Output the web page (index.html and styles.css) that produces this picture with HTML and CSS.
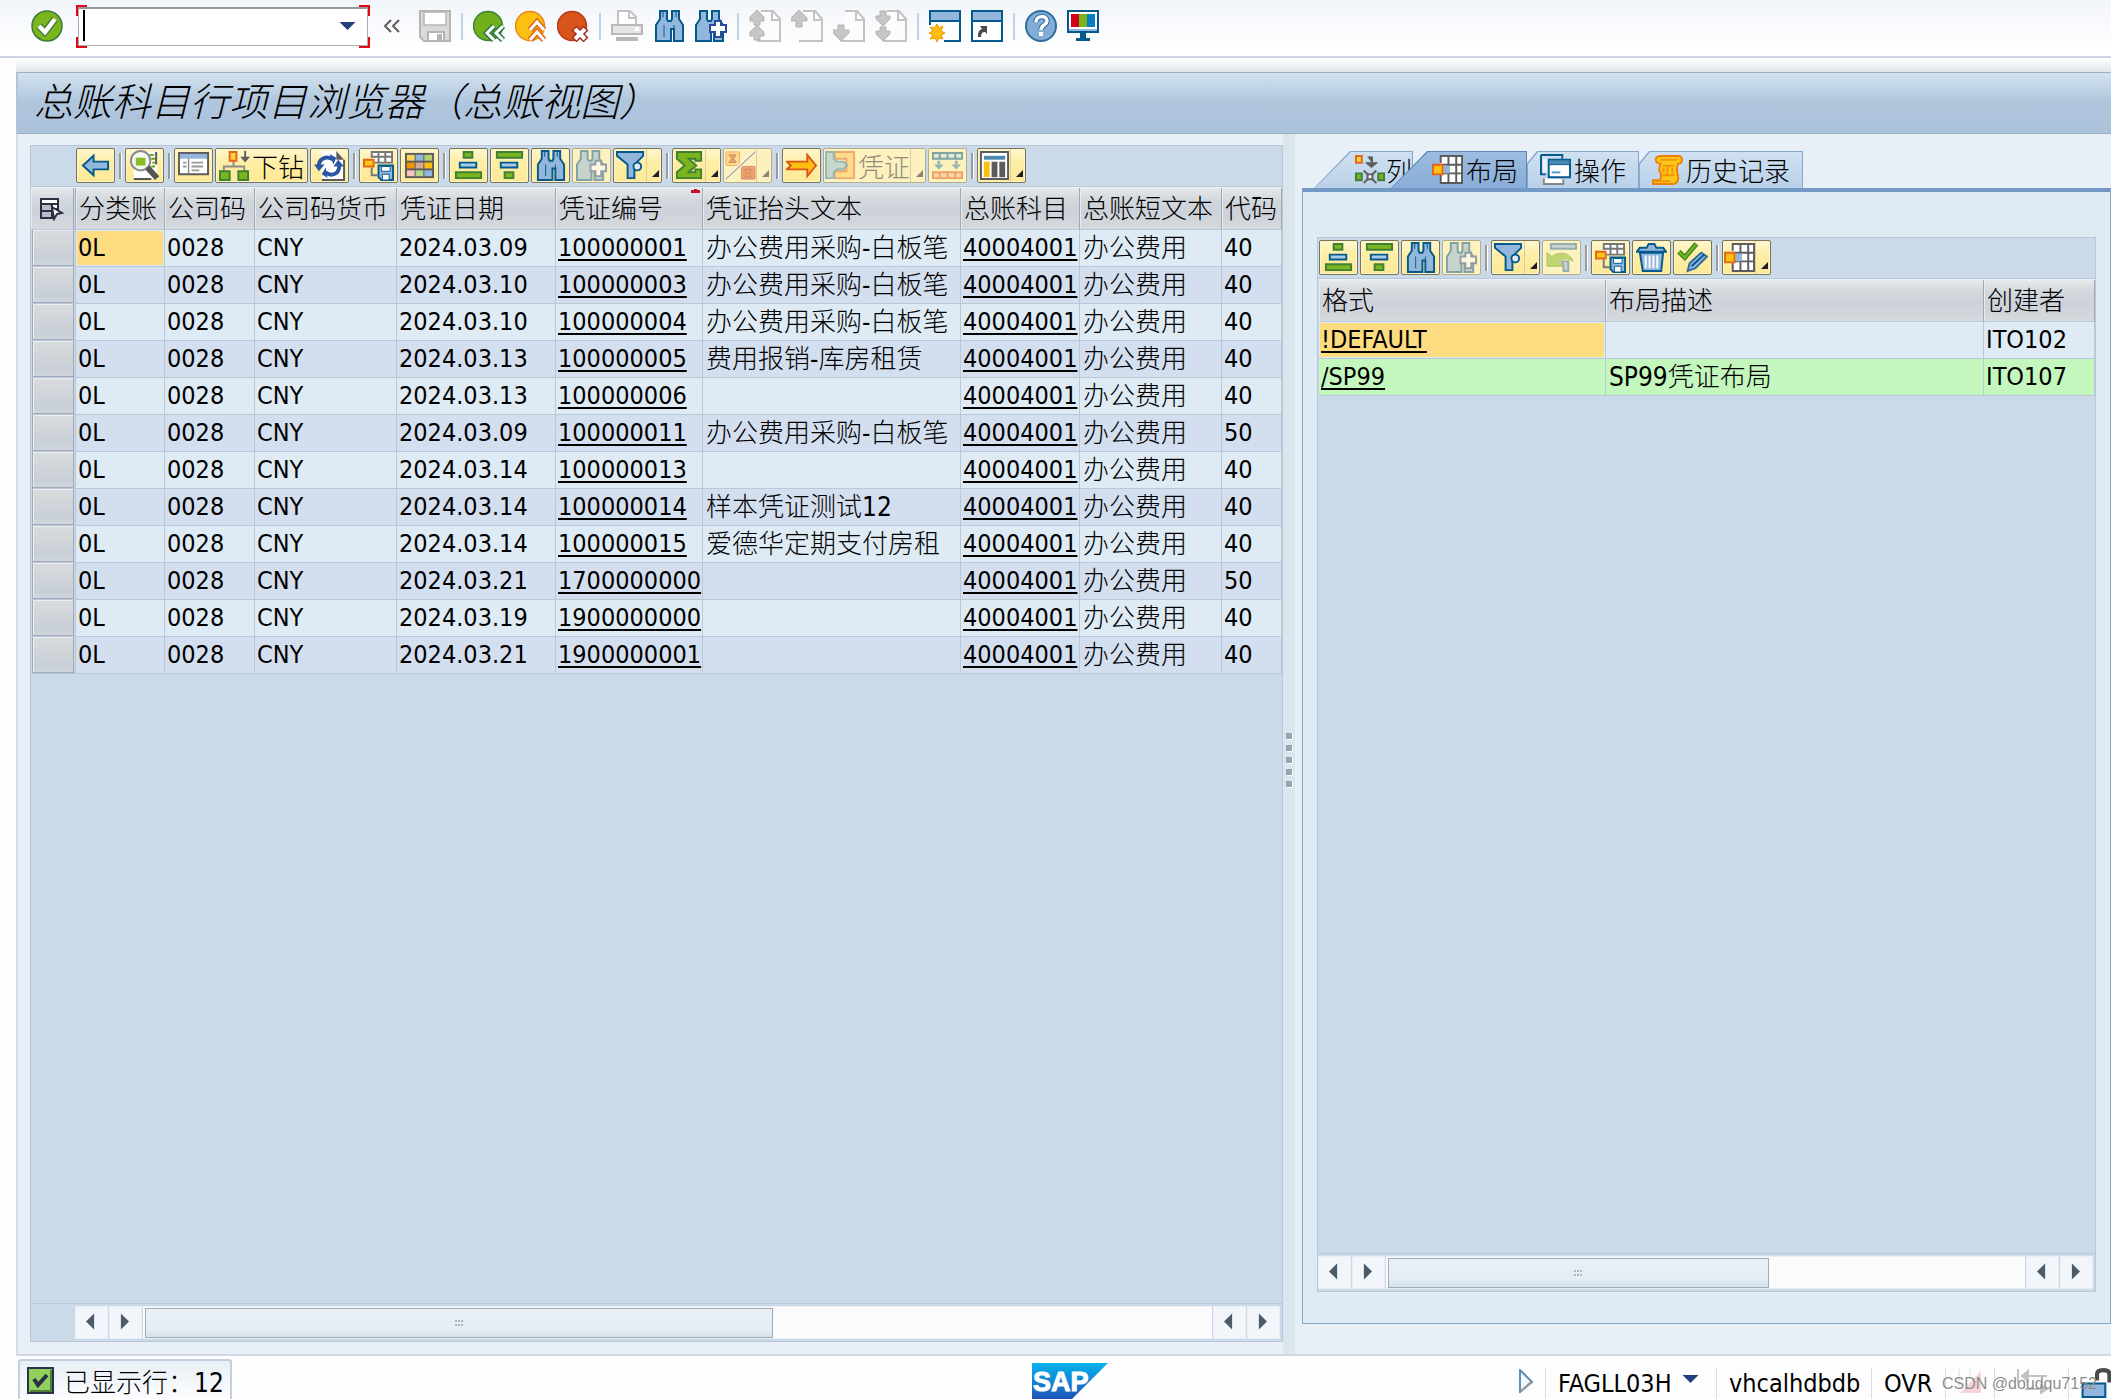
FILE: index.html
```html
<!DOCTYPE html>
<html lang="zh-CN">
<head>
    <meta charset="UTF-8">
    <meta name="viewport" content="width=device-width, initial-scale=1.0">
    <title>总账科目行项目浏览器（总账视图）</title>
    <link rel="stylesheet" href="styles.css">
</head>
<body>
    <!-- Icon set -->
    <svg class="icon-defs" aria-hidden="true">
        <defs>
            <linearGradient id="sap-blue" x1="0" y1="0" x2="0" y2="1">
                <stop offset="0" stop-color="#06b4ee"/>
                <stop offset="1" stop-color="#1f55b8"/>
            </linearGradient>
        </defs>
        <symbol id="i-ok" viewBox="0 0 32 32">
            <circle cx="16" cy="16" r="15" fill="#7ab51d" stroke="#3c7a3c" stroke-width="1.5"/>
            <path d="M8 16l6 6 10-13" fill="none" stroke="#3c7a3c" stroke-width="7"/>
            <path d="M8 16l6 6 10-13" fill="none" stroke="#fff" stroke-width="4.5"/>
        </symbol>
        <symbol id="i-save" viewBox="0 0 32 32">
            <path d="M1 1h30v30H5l-4-4z" fill="#d9d9d9" stroke="#b5b5b5" stroke-width="2"/>
            <path d="M5 2h22v13H5z" fill="#fff" stroke="#b5b5b5" stroke-width="1.5"/>
            <path d="M9 22h16v9H9z" fill="#fff" stroke="#b5b5b5" stroke-width="2"/>
            <path d="M18 24h5v6h-5z" fill="#b5b5b5"/>
        </symbol>
        <symbol id="i-back" viewBox="0 0 32 32">
            <circle cx="15" cy="16" r="14.5" fill="#6fb01c" stroke="#3f8038" stroke-width="1.5"/>
            <path d="M21 16l-7 7 7 7M30 16l-7 7 7 7" fill="none" stroke="#2d7a40" stroke-width="6"/>
            <path d="M21 16l-7 7 7 7M30 16l-7 7 7 7" fill="none" stroke="#fff" stroke-width="3"/>
        </symbol>
        <symbol id="i-exit" viewBox="0 0 32 32">
            <circle cx="15" cy="16" r="14.5" fill="#fdc010" stroke="#e58a1c" stroke-width="1.5"/>
            <path d="M15 20l7-8 7 8M15 30l7-8 7 8" fill="none" stroke="#e0681a" stroke-width="6"/>
            <path d="M15 20l7-8 7 8M15 30l7-8 7 8" fill="none" stroke="#fff" stroke-width="3"/>
        </symbol>
        <symbol id="i-cancel" viewBox="0 0 32 32">
            <circle cx="15" cy="16" r="14.5" fill="#d9541a" stroke="#b33c1c" stroke-width="1.5"/>
            <path d="M17 18l12 12M29 18L17 30" stroke="#a82a18" stroke-width="7"/>
            <path d="M18 19l10 10M28 19L18 29" stroke="#fff" stroke-width="4"/>
        </symbol>
        <symbol id="i-print" viewBox="0 0 32 32">
            <path d="M7 15V1h12l6 6v8" fill="#fff" stroke="#c3c3c3" stroke-width="2"/>
            <path d="M18 1v7h7" fill="none" stroke="#c3c3c3" stroke-width="2"/>
            <path d="M1 15h30v9H1z" fill="#e6e6e6" stroke="#b8b8b8" stroke-width="2"/>
            <path d="M24 17h4v4h-4z" fill="#fff"/>
            <path d="M5 27h22v4H5z" fill="#b8b8b8"/>
        </symbol>
        <symbol id="i-find" viewBox="0 0 32 32">
            <path d="M7 1h7v8l1 2h3l1-2V1h7v8l4 6v16h-9V19h-3v12H3V15l4-6z" fill="#93b7dc" stroke="#045a8d" stroke-width="2"/>
            <path d="M10 1v6M23 1v6M11 15v12M21 15v4" stroke="#045a8d" stroke-width="1"/>
        </symbol>
        <symbol id="i-findnext" viewBox="0 0 32 32">
            <path d="M5 1h7v8l1 2h3l1-2V1h7v8l4 6v16h-9V19h-3v12H1V15l4-6z" fill="#93b7dc" stroke="#045a8d" stroke-width="2"/>
            <path d="M20 11h6v4h5v7h-5v5h-6v-5h-5v-7h5z" fill="#fff" stroke="#2a4b9b" stroke-width="2"/>
        </symbol>
        <symbol id="i-page" viewBox="0 0 32 32">
            <path d="M12 1h12l7 8v22H8" fill="#fcfcfc" stroke="#c3c3c3" stroke-width="2"/>
            <path d="M23 1v9h8" fill="none" stroke="#c3c3c3" stroke-width="2"/>
        </symbol>
        <symbol id="i-first" viewBox="0 0 32 32">
            <use href="#i-page"/>
            <path d="M8 0l7 7v4h-4v4H5v-4H1V7zM8 15l7 7v4h-4v4H5v-4H1v-4z" fill="#c6c6c6" stroke="#b3b3b3"/>
        </symbol>
        <symbol id="i-prev" viewBox="0 0 32 32">
            <use href="#i-page"/>
            <path d="M8 0l8 8v3h-5v6H5v-6H0V8z" fill="#c6c6c6" stroke="#b3b3b3"/>
        </symbol>
        <symbol id="i-next" viewBox="0 0 32 32">
            <use href="#i-page"/>
            <path d="M8 31l8-8v-3h-5v-5H5v5H0v3z" fill="#c6c6c6" stroke="#b3b3b3"/>
        </symbol>
        <symbol id="i-last" viewBox="0 0 32 32">
            <use href="#i-page"/>
            <path d="M8 16l7-7V6h-4V1H5v5H1v3zM8 31l7-7v-3h-4v-4H5v4H1v3z" fill="#c6c6c6" stroke="#b3b3b3"/>
        </symbol>
        <symbol id="i-newsession" viewBox="0 0 32 32">
            <path d="M1 1h30v30H1z" fill="#fff"/>
            <path d="M1 1h30v9H1z" fill="#93b7dc"/>
            <path d="M1 15V1h30v30H15M1 11h30" fill="none" stroke="#045a8d" stroke-width="2"/>
            <path d="M8 14l2 4 4-2-2 5 4 2-4 2 2 4-4-1-2 4-2-4-5 1 3-4-4-2 4-2-3-4 5 1z" fill="#fdc010" stroke="#f29400"/>
        </symbol>
        <symbol id="i-shortcut" viewBox="0 0 32 32">
            <path d="M1 1h30v30H1z" fill="#fff" stroke="#045a8d" stroke-width="2"/>
            <path d="M2 2h28v8H2z" fill="#93b7dc"/>
            <path d="M1 11h30" stroke="#045a8d" stroke-width="2"/>
            <path d="M7 27c0-5 1-7 4-8l-2-3h7v8l-2-2c-3 0-4 2-4 5z" fill="#4a4a4a"/>
        </symbol>
        <symbol id="i-help" viewBox="0 0 32 32">
            <circle cx="16" cy="16" r="15" fill="#84add6" stroke="#2f6c9f" stroke-width="2"/>
            <path d="M11 12c0-7 11-7 11-1 0 4-6 4-6 9" fill="none" stroke="#2f6c9f" stroke-width="5.5"/>
            <path d="M11 12c0-7 11-7 11-1 0 4-6 4-6 9" fill="none" stroke="#fff" stroke-width="3.5"/>
            <path d="M14 22h4v4h-4z" fill="#fff"/>
        </symbol>
        <symbol id="i-monitor" viewBox="0 0 32 32">
            <path d="M1 1h30v21H1z" fill="#fff" stroke="#045a8d" stroke-width="2"/>
            <path d="M4 4h8v13H4z" fill="#d0021b"/>
            <path d="M12 4h8v13h-8z" fill="#7ab51d"/>
            <path d="M20 4h8v13h-8z" fill="#0a7cc4"/>
            <path d="M2 19h28v2H2z" fill="#93b7dc"/>
            <path d="M13 23h6v5h4v3H9v-3h4z" fill="#045a8d"/>
        </symbol>

        <symbol id="i-left" viewBox="0 0 32 32">
            <path d="M3 16L14 6v6h15v8H14v6z" fill="#93b7dc" stroke="#045a8d" stroke-width="2"/>
        </symbol>
        <symbol id="i-detail" viewBox="0 0 32 32">
            <path d="M7 2h22v28H5V18z" fill="#fff"/>
            <path d="M21 5h5M23 9h4M24 13h3M23 17h4" stroke="#5fa317" stroke-width="2"/>
            <path d="M28 2v13M5 30h18" stroke="#555" stroke-width="2"/>
            <circle cx="12" cy="11" r="10" fill="#f4f8ee" stroke="#8a8a8a" stroke-width="2"/>
            <path d="M7 8h10v8H7z" fill="#86bc25"/>
            <path d="M19 18l10 11" stroke="#555" stroke-width="6"/>
        </symbol>
        <symbol id="i-view" viewBox="0 0 32 32">
            <path d="M1 3h30v22H1z" fill="#fff" stroke="#5c5c5c" stroke-width="2"/>
            <path d="M2 4h28v5H2z" fill="#93b7dc"/>
            <path d="M11 9v15" stroke="#5c5c5c" stroke-width="1"/>
            <path d="M5 13h4M5 17h4M14 13h12M14 17h12M14 21h8" stroke="#9a9a9a" stroke-width="2"/>
        </symbol>
        <symbol id="i-drill" viewBox="0 0 32 32">
            <path d="M15 10v7M5 22v-5h21v5" fill="none" stroke="#8c8c8c" stroke-width="2"/>
            <path d="M11 2h7v9h-7z" fill="#ffd23c" stroke="#e2661c" stroke-width="2"/>
            <path d="M1 22h10v9H1zM20 22h10v9H20z" fill="#7ab51d" stroke="#3f8038" stroke-width="2"/>
            <path d="M27 1v7" stroke="#5c5c5c" stroke-width="2"/>
            <path d="M22 7h10l-5 6z" fill="#5c5c5c"/>
        </symbol>
        <symbol id="i-refresh" viewBox="0 0 32 32">
            <path d="M8 1h15l8 9v21H8z" fill="#fff"/>
            <path d="M23 1l8 9h-8z" fill="#5c5c5c"/>
            <path d="M8 31h23V10" fill="none" stroke="#5c5c5c" stroke-width="2"/>
            <path d="M5 18c-1-9 8-13 15-8M26 15c1 10-8 13-14 8" fill="none" stroke="#2a57a5" stroke-width="4"/>
            <path d="M0 15h11l-6 7zM16 4l7 4-3 7zM20 17h11l-6-7zM14 29l-6-4 4-7z" fill="#2a57a5"/>
        </symbol>
        <symbol id="i-savelayout" viewBox="0 0 32 32">
            <path d="M9 8V2h21v11H12" fill="#fff" stroke="#777" stroke-width="2"/>
            <path d="M16 2v11M23 2v11M9 7h21M9 18v8h6" fill="none" stroke="#777" stroke-width="2"/>
            <path d="M1 10h10v7H1z" fill="#ffc61a" stroke="#e2661c" stroke-width="2"/>
            <path d="M16 16h15v15H19l-3-3z" fill="#93b7dc" stroke="#045a8d" stroke-width="2"/>
            <path d="M19 17h9v5h-9zM20 25h7v6h-7z" fill="#fff" stroke="#045a8d"/>
        </symbol>
        <symbol id="i-colorgrid" viewBox="0 0 32 32">
            <path d="M1 3h30v26H1z" fill="#5c5c5c"/>
            <path d="M3 5h8v6H3z" fill="#ffd65c"/><path d="M12 5h8v6h-8z" fill="#93b7dc"/><path d="M21 5h8v6h-8z" fill="#b4d36a"/>
            <path d="M3 13h8v6H3z" fill="#f29400"/><path d="M12 13h8v6h-8z" fill="#d3ab98"/><path d="M21 13h8v6h-8z" fill="#fdc010"/>
            <path d="M3 21h8v6H3z" fill="#f6c3c0"/><path d="M12 21h8v6h-8z" fill="#b5d88a"/><path d="M21 21h8v6h-8z" fill="#93b7dc"/>
        </symbol>
        <symbol id="i-asc" viewBox="0 0 32 32">
            <path d="M11 2h9v6h-9zM3 23h26v6H3z" fill="#7ab51d" stroke="#3f8038" stroke-width="2"/>
            <path d="M7 13h17v5H7z" fill="#a9cbe8" stroke="#045a8d" stroke-width="2"/>
        </symbol>
        <symbol id="i-desc" viewBox="0 0 32 32">
            <path d="M3 2h26v6H3zM11 23h9v6h-9z" fill="#7ab51d" stroke="#3f8038" stroke-width="2"/>
            <path d="M7 13h17v5H7z" fill="#a9cbe8" stroke="#045a8d" stroke-width="2"/>
        </symbol>
        <symbol id="i-filter" viewBox="0 0 32 32">
            <path d="M2 2h27v4l-9 9v14h-7V15L2 6z" fill="#93b7dc" stroke="#045a8d" stroke-width="2"/>
            <circle cx="23" cy="17" r="4" fill="#dfeaf2" stroke="#045a8d" stroke-width="2"/>
        </symbol>
        <symbol id="i-sum" viewBox="0 0 32 32">
            <path d="M3 2h25v9h-6V9h-7l8 7-8 7h7v-3h6v9H3v-6l8-7-8-7z" fill="#7ab51d" stroke="#3f8038" stroke-width="2"/>
        </symbol>
        <symbol id="i-subtotal" viewBox="0 0 32 32">
            <path d="M1 2h14v14H1z" fill="#ffc95c" stroke="#e2661c"/>
            <path d="M17 17h14v13H17z" fill="#e2511c" stroke="#b33c1c"/>
            <path d="M4 5h7v2L8 9l3 2v2H4l3-4zM20 20h7v2l-3 2 3 2v2h-7l3-4z" fill="#d9541a" stroke="#9b2c15"/>
            <path d="M31 2L1 30" stroke="#fff" stroke-width="4"/>
            <path d="M31 2L1 30" stroke="#666" stroke-width="1.5"/>
        </symbol>
        <symbol id="i-right" viewBox="0 0 32 32">
            <path d="M1 12h21V5l9 11-9 11v-7H1l4-4z" fill="#fdc010" stroke="#d9541a" stroke-width="2"/>
        </symbol>
        <symbol id="i-doc" viewBox="0 0 32 32">
            <path d="M10 2h20v27H10v-7h12V9H10z" fill="#ffc95c" stroke="#e2661c" stroke-width="2"/>
            <path d="M1 2h8v7l3 3h7l4 4-4 4h-7l-3 3v6H1z" fill="#93c3dc" stroke="#2f7ca8" stroke-width="2"/>
        </symbol>
        <symbol id="i-expand" viewBox="0 0 32 32">
            <path d="M1 3h30v6H1z" fill="#cfe3f0" stroke="#045a8d" stroke-width="2"/>
            <path d="M8 3v6M16 3v6M24 3v6" stroke="#045a8d" stroke-width="2"/>
            <path d="M7 11v4M25 11v4" stroke="#2f7ca8" stroke-width="3"/>
            <path d="M2 15h10l-5 5zM20 15h10l-5 5z" fill="#2f7ca8"/>
            <path d="M1 23h30v6H1z" fill="#f6c08a" stroke="#d9541a" stroke-width="2"/>
            <path d="M8 23v6M16 23v6M24 23v6" stroke="#d9541a" stroke-width="2"/>
        </symbol>
        <symbol id="i-columns" viewBox="0 0 32 32">
            <path d="M2 2h28v28H2z" fill="#fff" stroke="#5c5c5c" stroke-width="2"/>
            <path d="M5 6h22v4H5z" fill="#4a87b0"/>
            <path d="M5 12h6v16H5z" fill="#fdc010"/>
            <path d="M13 12h6v16h-6zM21 12h6v16h-6z" fill="#5c5c5c"/>
        </symbol>
        <symbol id="i-unfilter" viewBox="0 0 32 32">
            <path d="M5 2h26v5H5z" fill="#93b7dc" stroke="#2f6c9f" stroke-width="2"/>
            <path d="M16 20h7v10h-5v-6z" fill="#93b7dc" stroke="#2f6c9f" stroke-width="2"/>
            <path d="M1 11l5 4c8-6 19-4 22 5-6-4-11-3-15 0l5 5H1z" fill="#86bc25" stroke="#5f9a1c" stroke-width="1"/>
        </symbol>
        <symbol id="i-trash" viewBox="0 0 32 32">
            <path d="M1 10l3-4h7l2-4h6l2 4h7l3 4z" fill="#93b7dc" stroke="#045a8d" stroke-width="2"/>
            <path d="M4 11h24l-2 19H7z" fill="#93b7dc" stroke="#045a8d" stroke-width="2"/>
            <path d="M10 14v13M14 14v13M18 14v13M22 14v13" stroke="#fff" stroke-width="2"/>
        </symbol>
        <symbol id="i-checkedit" viewBox="0 0 32 32">
            <path d="M2 10l6 6L20 2" fill="none" stroke="#2e6e2e" stroke-width="5"/>
            <path d="M2 10l6 6L20 2" fill="none" stroke="#6fb01c" stroke-width="3"/>
            <path d="M11 30l2-8 12-11 6 4-12 12z" fill="#93b7dc" stroke="#2f6c9f" stroke-width="2"/>
            <path d="M15 25l13-12" stroke="#045a8d" stroke-width="2"/>
        </symbol>
        <symbol id="i-layout" viewBox="0 0 32 32">
            <path d="M9 2h22v28H9z" fill="#fff"/>
            <path d="M31 2H9v7M9 20v10h22M17 2v28M25 2v28M31 1v30M9 11h22M9 20h22" fill="none" stroke="#5c5c5c" stroke-width="2"/>
            <path d="M12 12h6v8h-6z" fill="#93b7dc"/>
            <path d="M1 11h10v10H1z" fill="#fdc010" stroke="#e2661c" stroke-width="2"/>
        </symbol>
        <symbol id="i-cols" viewBox="0 0 32 32">
            <path d="M1 2h6v7H1z" fill="#ffd23c" stroke="#e2661c" stroke-width="2"/>
            <path d="M13 3h5v7M11 9h12l-6 5z" fill="#5c5c5c" stroke="#5c5c5c" stroke-width="1"/>
            <path d="M9 17l13 13M22 17L9 30" stroke="#5c5c5c" stroke-width="2"/>
            <path d="M13 21h5v5h-5z" fill="#fff" stroke="#5c5c5c" stroke-width="2"/>
            <path d="M1 20h6v7H1zM24 20h6v7h-6z" fill="#7ab51d" stroke="#3f8038" stroke-width="2"/>
        </symbol>
        <symbol id="i-ops" viewBox="0 0 32 32">
            <path d="M1 1h22v4M1 1v20h5" fill="none" stroke="#045a8d" stroke-width="2"/>
            <path d="M3 5h5v14H3z" fill="#e9f2f9"/>
            <path d="M4 25v6h20v-5" fill="#fff" stroke="#888" stroke-width="2"/>
            <path d="M9 6h22v18H9z" fill="#fff" stroke="#045a8d" stroke-width="2"/>
            <path d="M9 6h22v5H9z" fill="#4a87b0" stroke="#045a8d" stroke-width="1"/>
            <path d="M12 19h9" stroke="#4a9bd0" stroke-width="2"/>
        </symbol>
        <symbol id="i-history" viewBox="0 0 32 32">
            <path d="M8 2q-5 1-4 5 1 3 5 3-3 6 0 10 1 4-1 7H1v4h21q5-1 5-6 0-3-1-6-1-5 1-9 4 0 4-4 0-4-4-4z" fill="#ffc61a" stroke="#ee7f11" stroke-width="2"/>
            <path d="M9 6h17M11 12h12M16 12v10M21 14v6M12 14v5M11 22h12M3 28h16" fill="none" stroke="#f29400" stroke-width="2"/>
        </symbol>
        <symbol id="i-selectall" viewBox="0 0 24 24">
            <path d="M1 2h17v5H1zM1 7h17v5H1z" fill="#fff" stroke="#2c3047" stroke-width="2"/>
            <path d="M1 7h11v14H1zM1 14h11" fill="#b9bec8" stroke="#2c3047" stroke-width="2"/>
            <path d="M12 10l10 6-5 1-3 5z" fill="#fff" stroke="#2c3047" stroke-width="2"/>
        </symbol>
        <symbol id="i-down" viewBox="0 0 18 9">
            <path d="M0 0h18l-9 9z" fill="#24407c"/>
        </symbol>
        <symbol id="i-corner" viewBox="0 0 8 8">
            <path d="M8 0v8H0z" fill="#1d1d2b"/>
        </symbol>
        <symbol id="i-tri-left" viewBox="0 0 10 18">
            <path d="M9 0v18L0 9z" fill="#4a5c6c"/>
        </symbol>
        <symbol id="i-tri-right" viewBox="0 0 10 18">
            <path d="M1 0v18l9-9z" fill="#4a5c6c"/>
        </symbol>
        <symbol id="i-grip" viewBox="0 0 9 7">
            <path d="M0 0h2v2H0zM3 0h2v2H3zM6 0h2v2H6zM0 4h2v2H0zM3 4h2v2H3zM6 4h2v2H6z" fill="#a9b6c3"/>
        </symbol>
        <symbol id="i-success" viewBox="0 0 27 27">
            <path d="M1 1h25v25H1z" fill="#8fd15c" stroke="#2c3047" stroke-width="2"/>
            <path d="M3 24h21V3" fill="none" stroke="#4f7f3c" stroke-width="2"/>
            <path d="M7 12l4 6 9-10" fill="none" stroke="#2c3047" stroke-width="4"/>
        </symbol>
        <symbol id="i-lock" viewBox="0 0 28 30">
            <path d="M15 12V6q0-4 6-4t6 4v8" fill="none" stroke="#4a4a4a" stroke-width="4"/>
            <path d="M1 15h22v13H1z" fill="#93b7dc" stroke="#045a8d" stroke-width="2"/>
        </symbol>
    </svg>

    <!-- System toolbar -->
    <header class="system-bar">
        <button class="system-button" aria-label="回车"><svg><use href="#i-ok"/></svg></button>
        <div class="command">
            <input class="command-input" type="text" aria-label="命令">
            <span class="command-caret"></span>
            <button class="command-open" aria-label="命令历史"><svg><use href="#i-down"/></svg></button>
        </div>
        <button class="system-collapse" aria-label="隐藏命令字段"><svg viewBox="0 0 18 14"><path d="M8 1L2 7l6 6M16 1l-6 6 6 6" fill="none" stroke="#5c5c5c" stroke-width="2"/></svg></button>
        <button class="system-button" aria-label="保存"><svg><use href="#i-save"/></svg></button>
        <span class="system-separator"></span>
        <button class="system-button" aria-label="返回"><svg><use href="#i-back"/></svg></button>
        <button class="system-button" aria-label="退出"><svg><use href="#i-exit"/></svg></button>
        <button class="system-button" aria-label="取消"><svg><use href="#i-cancel"/></svg></button>
        <span class="system-separator"></span>
        <button class="system-button" aria-label="打印"><svg><use href="#i-print"/></svg></button>
        <button class="system-button" aria-label="查找"><svg><use href="#i-find"/></svg></button>
        <button class="system-button" aria-label="继续查找"><svg><use href="#i-findnext"/></svg></button>
        <span class="system-separator"></span>
        <button class="system-button" aria-label="首页"><svg><use href="#i-first"/></svg></button>
        <button class="system-button" aria-label="上一页"><svg><use href="#i-prev"/></svg></button>
        <button class="system-button" aria-label="下一页"><svg><use href="#i-next"/></svg></button>
        <button class="system-button" aria-label="末页"><svg><use href="#i-last"/></svg></button>
        <span class="system-separator"></span>
        <button class="system-button" aria-label="新建会话"><svg><use href="#i-newsession"/></svg></button>
        <button class="system-button" aria-label="创建快捷方式"><svg><use href="#i-shortcut"/></svg></button>
        <span class="system-separator"></span>
        <button class="system-button" aria-label="帮助"><svg><use href="#i-help"/></svg></button>
        <button class="system-button" aria-label="定制本地布局"><svg><use href="#i-monitor"/></svg></button>
    </header>

    <main class="window">
        <h1 class="title">总账科目行项目浏览器（总账视图）</h1>
        <div class="panes">
            <!-- Line items -->
            <section class="pane-left">
                <div class="grid">
                    <div class="toolbar toolbar-items">
                        <button class="tool" aria-label="返回"><svg><use href="#i-left"/></svg></button>
                        <span class="tool-separator"></span>
                        <button class="tool" aria-label="细节"><svg><use href="#i-detail"/></svg></button>
                        <span class="tool-separator"></span>
                        <button class="tool" aria-label="视图"><svg><use href="#i-view"/></svg></button>
                        <button class="tool tool-text"><svg><use href="#i-drill"/></svg>下钻</button>
                        <button class="tool" aria-label="刷新"><svg><use href="#i-refresh"/></svg></button>
                        <span class="tool-separator"></span>
                        <button class="tool" aria-label="保存布局"><svg><use href="#i-savelayout"/></svg></button>
                        <button class="tool" aria-label="颜色"><svg><use href="#i-colorgrid"/></svg></button>
                        <span class="tool-separator"></span>
                        <button class="tool" aria-label="升序"><svg><use href="#i-asc"/></svg></button>
                        <button class="tool" aria-label="降序"><svg><use href="#i-desc"/></svg></button>
                        <button class="tool" aria-label="查找"><svg><use href="#i-find"/></svg></button>
                        <button class="tool" aria-label="继续查找" disabled><svg><use href="#i-findnext"/></svg></button>
                        <button class="tool tool-menu" aria-label="过滤器"><svg><use href="#i-filter"/></svg><span class="tool-arrow"><svg><use href="#i-corner"/></svg></span></button>
                        <span class="tool-separator"></span>
                        <button class="tool tool-menu" aria-label="总计"><svg><use href="#i-sum"/></svg><span class="tool-arrow"><svg><use href="#i-corner"/></svg></span></button>
                        <button class="tool tool-menu" aria-label="小计" disabled><svg><use href="#i-subtotal"/></svg><span class="tool-arrow"><svg><use href="#i-corner"/></svg></span></button>
                        <span class="tool-separator"></span>
                        <button class="tool" aria-label="转到"><svg><use href="#i-right"/></svg></button>
                        <button class="tool tool-menu tool-menu-text" disabled><svg><use href="#i-doc"/></svg><span>凭证</span><span class="tool-arrow"><svg><use href="#i-corner"/></svg></span></button>
                        <button class="tool" aria-label="展开" disabled><svg><use href="#i-expand"/></svg></button>
                        <span class="tool-separator"></span>
                        <button class="tool tool-menu" aria-label="列"><svg><use href="#i-columns"/></svg><span class="tool-arrow"><svg><use href="#i-corner"/></svg></span></button>
                    </div>
                    <div class="grid-body">
                        <table class="table">
                            <colgroup>
                                <col class="col-select"><col class="col-ledger"><col class="col-company"><col class="col-currency"><col class="col-date"><col class="col-document"><col class="col-text"><col class="col-account"><col class="col-short"><col>
                            </colgroup>
                            <thead>
                                <tr>
                                    <th class="select"><button class="select-all" aria-label="全选"><svg><use href="#i-selectall"/></svg></button></th>
                                    <th>分类账</th><th>公司码</th><th>公司码货币</th><th>凭证日期</th><th class="sorted">凭证编号</th><th>凭证抬头文本</th><th>总账科目</th><th>总账短文本</th><th>代码</th>
                                </tr>
                            </thead>
                            <tbody>
                                <tr><td class="select"><button class="row-select" aria-label="选择行"></button></td><td class="current">0L</td><td>0028</td><td>CNY</td><td>2024.03.09</td><td><a href="#">100000001</a></td><td class="cjk">办公费用采购-白板笔</td><td><a href="#">40004001</a></td><td class="cjk">办公费用</td><td>40</td></tr>
                                <tr><td class="select"><button class="row-select" aria-label="选择行"></button></td><td>0L</td><td>0028</td><td>CNY</td><td>2024.03.10</td><td><a href="#">100000003</a></td><td class="cjk">办公费用采购-白板笔</td><td><a href="#">40004001</a></td><td class="cjk">办公费用</td><td>40</td></tr>
                                <tr><td class="select"><button class="row-select" aria-label="选择行"></button></td><td>0L</td><td>0028</td><td>CNY</td><td>2024.03.10</td><td><a href="#">100000004</a></td><td class="cjk">办公费用采购-白板笔</td><td><a href="#">40004001</a></td><td class="cjk">办公费用</td><td>40</td></tr>
                                <tr><td class="select"><button class="row-select" aria-label="选择行"></button></td><td>0L</td><td>0028</td><td>CNY</td><td>2024.03.13</td><td><a href="#">100000005</a></td><td class="cjk">费用报销-库房租赁</td><td><a href="#">40004001</a></td><td class="cjk">办公费用</td><td>40</td></tr>
                                <tr><td class="select"><button class="row-select" aria-label="选择行"></button></td><td>0L</td><td>0028</td><td>CNY</td><td>2024.03.13</td><td><a href="#">100000006</a></td><td></td><td><a href="#">40004001</a></td><td class="cjk">办公费用</td><td>40</td></tr>
                                <tr><td class="select"><button class="row-select" aria-label="选择行"></button></td><td>0L</td><td>0028</td><td>CNY</td><td>2024.03.09</td><td><a href="#">100000011</a></td><td class="cjk">办公费用采购-白板笔</td><td><a href="#">40004001</a></td><td class="cjk">办公费用</td><td>50</td></tr>
                                <tr><td class="select"><button class="row-select" aria-label="选择行"></button></td><td>0L</td><td>0028</td><td>CNY</td><td>2024.03.14</td><td><a href="#">100000013</a></td><td></td><td><a href="#">40004001</a></td><td class="cjk">办公费用</td><td>40</td></tr>
                                <tr><td class="select"><button class="row-select" aria-label="选择行"></button></td><td>0L</td><td>0028</td><td>CNY</td><td>2024.03.14</td><td><a href="#">100000014</a></td><td class="cjk">样本凭证测试12</td><td><a href="#">40004001</a></td><td class="cjk">办公费用</td><td>40</td></tr>
                                <tr><td class="select"><button class="row-select" aria-label="选择行"></button></td><td>0L</td><td>0028</td><td>CNY</td><td>2024.03.14</td><td><a href="#">100000015</a></td><td class="cjk">爱德华定期支付房租</td><td><a href="#">40004001</a></td><td class="cjk">办公费用</td><td>40</td></tr>
                                <tr><td class="select"><button class="row-select" aria-label="选择行"></button></td><td>0L</td><td>0028</td><td>CNY</td><td>2024.03.21</td><td><a href="#">1700000000</a></td><td></td><td><a href="#">40004001</a></td><td class="cjk">办公费用</td><td>50</td></tr>
                                <tr><td class="select"><button class="row-select" aria-label="选择行"></button></td><td>0L</td><td>0028</td><td>CNY</td><td>2024.03.19</td><td><a href="#">1900000000</a></td><td></td><td><a href="#">40004001</a></td><td class="cjk">办公费用</td><td>40</td></tr>
                                <tr><td class="select"><button class="row-select" aria-label="选择行"></button></td><td>0L</td><td>0028</td><td>CNY</td><td>2024.03.21</td><td><a href="#">1900000001</a></td><td></td><td><a href="#">40004001</a></td><td class="cjk">办公费用</td><td>40</td></tr>
                            </tbody>
                        </table>
                    </div>
                    <div class="scrollbar scrollbar-items">
                        <button class="scroll-button" aria-label="向左"><svg><use href="#i-tri-left"/></svg></button>
                        <button class="scroll-button" aria-label="向右"><svg><use href="#i-tri-right"/></svg></button>
                        <div class="scroll-track"><div class="scroll-thumb thumb-items"><svg><use href="#i-grip"/></svg></div></div>
                        <button class="scroll-button" aria-label="向左"><svg><use href="#i-tri-left"/></svg></button>
                        <button class="scroll-button" aria-label="向右"><svg><use href="#i-tri-right"/></svg></button>
                    </div>
                </div>
            </section>

            <div class="splitter"><i></i><i></i><i></i><i></i><i></i></div>

            <!-- Layouts -->
            <section class="pane-right">
                <div class="tabs" role="tablist">
                    <button class="tab tab-slant tab-columns" role="tab"><svg><use href="#i-cols"/></svg>列</button>
                    <button class="tab tab-slant tab-active" role="tab" aria-selected="true"><svg><use href="#i-layout"/></svg>布局</button>
                    <button class="tab" role="tab"><svg><use href="#i-ops"/></svg>操作</button>
                    <button class="tab" role="tab"><svg><use href="#i-history"/></svg>历史记录</button>
                </div>
                <div class="tab-panel">
                    <div class="grid">
                        <div class="toolbar">
                            <button class="tool" aria-label="升序"><svg><use href="#i-asc"/></svg></button>
                            <button class="tool" aria-label="降序"><svg><use href="#i-desc"/></svg></button>
                            <button class="tool" aria-label="查找"><svg><use href="#i-find"/></svg></button>
                            <button class="tool" aria-label="继续查找" disabled><svg><use href="#i-findnext"/></svg></button>
                            <span class="tool-separator"></span>
                            <button class="tool tool-menu" aria-label="过滤器"><svg><use href="#i-filter"/></svg><span class="tool-arrow"><svg><use href="#i-corner"/></svg></span></button>
                            <button class="tool" aria-label="删除过滤器" disabled><svg><use href="#i-unfilter"/></svg></button>
                            <span class="tool-separator"></span>
                            <button class="tool" aria-label="保存布局"><svg><use href="#i-savelayout"/></svg></button>
                            <button class="tool" aria-label="删除"><svg><use href="#i-trash"/></svg></button>
                            <button class="tool" aria-label="设为缺省"><svg><use href="#i-checkedit"/></svg></button>
                            <span class="tool-separator"></span>
                            <button class="tool tool-menu" aria-label="布局"><svg><use href="#i-layout"/></svg><span class="tool-arrow"><svg><use href="#i-corner"/></svg></span></button>
                        </div>
                        <div class="grid-body">
                            <table class="table table-layouts">
                                <colgroup><col class="col-format"><col class="col-description"><col></colgroup>
                                <thead>
                                    <tr><th>格式</th><th>布局描述</th><th>创建者</th></tr>
                                </thead>
                                <tbody>
                                    <tr><td class="current"><a href="#">!DEFAULT</a></td><td></td><td>ITO102</td></tr>
                                    <tr class="active-layout"><td><a href="#">/SP99</a></td><td class="cjk">SP99凭证布局</td><td>ITO107</td></tr>
                                </tbody>
                            </table>
                        </div>
                        <div class="scrollbar">
                            <button class="scroll-button" aria-label="向左"><svg><use href="#i-tri-left"/></svg></button>
                            <button class="scroll-button" aria-label="向右"><svg><use href="#i-tri-right"/></svg></button>
                            <div class="scroll-track"><div class="scroll-thumb thumb-layouts"><svg><use href="#i-grip"/></svg></div></div>
                            <button class="scroll-button" aria-label="向左"><svg><use href="#i-tri-left"/></svg></button>
                            <button class="scroll-button" aria-label="向右"><svg><use href="#i-tri-right"/></svg></button>
                        </div>
                    </div>
                </div>
            </section>
        </div>
    </main>

    <!-- Status bar -->
    <footer class="status-bar">
        <div class="status-message"><svg><use href="#i-success"/></svg>已显示行：12</div>
        <svg class="sap-logo" viewBox="0 0 76 36">
            <path d="M0 0h76L40 36H0z" fill="url(#sap-blue)"/>
            <text class="sap-text" x="1" y="28">SAP</text>
        </svg>
        <div class="status-info">
            <button class="status-expand" aria-label="展开状态栏"><svg viewBox="0 0 14 24"><path d="M1 1v22l12-10z" fill="#f2f8fc" stroke="#5f8fb4" stroke-width="2"/><path d="M2 22l10-9" stroke="#9a9a9a" stroke-width="2"/></svg></button>
            <button class="status-item status-transaction">FAGLL03H<svg><use href="#i-down"/></svg></button>
            <span class="status-item status-host">vhcalhdbdb</span>
            <span class="status-item status-mode">OVR</span>
            <span class="status-item status-signal"><svg viewBox="0 0 24 26"><path d="M1 1v20M12 1v8" stroke="#ececec" stroke-width="2"/><path d="M23 3v22H2z" fill="#f8d3d6"/></svg></span>
            <span class="status-item status-key"><svg viewBox="0 0 32 26"><path d="M1 1v13M5 8h25M5 8l6-5v10zM8 21h22M30 21l-6-4v8z" fill="#c2c2c2" stroke="#c2c2c2" stroke-width="2"/></svg></span>
            <span class="status-item status-lock"><svg><use href="#i-lock"/></svg></span>
        </div>
        <span class="watermark">CSDN @doudqu7152</span>
    </footer>
</body>
</html>
```
FILE: styles.css
```css
* {
    box-sizing: border-box;
}
body {
    display: flex;
    flex-direction: column;
    min-height: 100vh;
    margin: 0;
    background-color: #fdfdfe;
    color: #000;
    font-family: 'DejaVu Sans Condensed', 'Noto Sans', 'Noto Sans CJK SC', sans-serif;
    font-size: 25px;
    overflow-x: hidden;
}
button {
    margin: 0;
    padding: 0;
    border: none;
    background: none;
    color: inherit;
    font: inherit;
    cursor: pointer;
}
svg {
    display: block;
    flex: none;
}
.icon-defs {
    position: absolute;
    width: 0;
    height: 0;
}

/* System toolbar */
.system-bar {
    display: flex;
    align-items: center;
    gap: 10px;
    height: 58px;
    padding: 0 31px 4px;
    background: linear-gradient(#f2f5fa, #fff 50px);
    border-bottom: 2px solid #ccd2e0;
}
.system-button svg {
    width: 32px;
    height: 32px;
}
.system-separator {
    width: 2px;
    height: 27px;
    background-color: #b9d3ea;
}
/* Input with red focus corners */
.command {
    --corner: #e30613;
    position: relative;
    width: 294px;
    height: 43px;
    margin-left: 3px;
    padding: 2px;
    background:
        linear-gradient(var(--corner), var(--corner)) left top / 11px 2px,
        linear-gradient(var(--corner), var(--corner)) left top / 2px 11px,
        linear-gradient(var(--corner), var(--corner)) right top / 11px 2px,
        linear-gradient(var(--corner), var(--corner)) right top / 2px 11px,
        linear-gradient(var(--corner), var(--corner)) left bottom / 11px 2px,
        linear-gradient(var(--corner), var(--corner)) left bottom / 2px 11px,
        linear-gradient(var(--corner), var(--corner)) right bottom / 11px 2px,
        linear-gradient(var(--corner), var(--corner)) right bottom / 2px 11px;
    background-repeat: no-repeat;
}
.command-input {
    display: block;
    width: 100%;
    height: 100%;
    padding: 0 40px 0 6px;
    border: 1px solid #a9adb3;
    border-top: 2px solid #94989e;
    background-color: #fff;
    font: inherit;
    outline: none;
}
.command-caret {
    position: absolute;
    left: 7px;
    top: 5px;
    width: 2px;
    height: 31px;
    background-color: #000;
}
.command-open {
    position: absolute;
    right: 14px;
    top: 17px;
}
.command-open svg,
.status-transaction svg {
    width: 17px;
    height: 8px;
}
.system-collapse {
    margin: 0 8px 0 3px;
}
.system-collapse svg {
    width: 18px;
    height: 14px;
}

/* Window */
.window {
    flex: 1;
    display: flex;
    flex-direction: column;
    padding: 14px 0 0 16px;
    background: linear-gradient(#fff, #dfe5ec) 16px 0 / 100% 14px no-repeat;
}
.title {
    height: 62px;
    margin: 0;
    padding-left: 16px;
    border: 1px solid #9fb0c5;
    border-right: none;
    border-left: 2px solid #b4c3d6;
    background: linear-gradient(#d3e4f0, #b0c6dd 28px, #abc2db);
    font-size: 39px;
    font-weight: 300;
    font-style: italic;
    line-height: 60px;
    white-space: nowrap;
}
.panes {
    flex: 1;
    display: grid;
    grid-template-columns: minmax(0, 1265fr) 12px minmax(0, 816fr);
    border-left: 2px solid #d5dce8;
    border-bottom: 2px solid #d2d8e3;
    background-color: #e8eff7;
}
.pane-left {
    display: flex;
    padding: 11px 0 12px 12px;
}
.splitter {
    display: flex;
    flex-direction: column;
    align-items: center;
    justify-content: center;
    gap: 6px;
    padding-top: 32px;
    background-color: #dae5ec;
}
.splitter i {
    width: 6px;
    height: 6px;
    background-color: #97a3b3;
    box-shadow: 1px 1px 0 #fff;
}
.pane-right {
    display: flex;
    flex-direction: column;
    padding: 17px 0 30px 7px;
}

/* Grid */
.grid {
    flex: 1;
    display: flex;
    flex-direction: column;
    min-width: 0;
    border: 1px solid #bac7d9;
    background-color: #cadae9;
}
.grid-body {
    flex: 1;
    overflow: hidden;
}
.toolbar {
    display: flex;
    gap: 2px;
    height: 41px;
    padding: 2px 1px 0;
    border-bottom: 1px solid #bac7d9;
}
.toolbar-items {
    padding-left: 45px;
}
.tool {
    display: flex;
    align-items: center;
    width: 39px;
    height: 35px;
    padding-left: 3px;
    border: 1px solid #77745f;
    border-radius: 2px;
    background: linear-gradient(#fff7d0, #feeea5 40%, #fde994);
    box-shadow: inset 0 0 0 1px #fff4c4;
    font-size: 26px;
    font-weight: 300;
    white-space: nowrap;
}
.tool > svg {
    width: 31px;
    height: 31px;
}
.tool-text {
    width: 93px;
    gap: 2px;
}
.tool-menu {
    width: 49px;
    padding-left: 1px;
}
.tool-menu-text {
    width: 103px;
}
.tool-menu-text > span:first-of-type {
    padding-left: 2px;
}
.tool-arrow {
    display: flex;
    align-items: flex-end;
    height: 100%;
    padding: 0 3px 5px 5px;
    border-left: 1px solid #d8cf9c;
}
.tool-arrow svg {
    width: 7px;
    height: 7px;
}
.tool:disabled {
    border-color: #b3ad8d;
    background: #fdf1bd;
    color: #8f8c7d;
}
.tool:disabled svg {
    opacity: 0.5;
}
.tool-separator {
    width: 6px;
    height: 26px;
    margin-top: 5px;
    background: linear-gradient(90deg, transparent 2px, #9a9a9a 2px, #9a9a9a 4px, #fff 4px);
    border-right: 1px solid #cadae9;
}

/* Tables */
.table {
    width: 100%;
    border-collapse: separate;
    border-spacing: 0;
    table-layout: fixed;
    border-top: 1px solid #e8eff7;
}
.table-layouts {
    padding-left: 1px;
}
.col-select {
    width: 45px;
}
.col-ledger {
    width: 89px;
}
.col-company {
    width: 90px;
}
.col-currency {
    width: 142px;
}
.col-date {
    width: 159px;
}
.col-document {
    width: 147px;
}
.col-text {
    width: 258px;
}
.col-account {
    width: 119px;
}
.col-short {
    width: 142px;
}
.col-format {
    width: 287px;
}
.col-description {
    width: 378px;
}
.table th {
    height: 42px;
    padding: 0 0 0 3px;
    border-right: 1px solid #9fa9b8;
    border-bottom: 1px solid #bac7d9;
    background: linear-gradient(#e6e9ec, #d3d8dc 12px, #cdd1da 24px, #d5dadd);
    box-shadow: inset 1px 1px 0 #e9ecee;
    font-size: 26px;
    font-weight: 300;
    line-height: 40px;
    text-align: left;
    white-space: nowrap;
    overflow: hidden;
}
.table td {
    height: 37px;
    padding: 0 0 0 2px;
    border-right: 1px solid #bac7d9;
    border-bottom: 1px solid #bac7d9;
    background-color: #deebf5;
    line-height: 36px;
    white-space: nowrap;
    overflow: hidden;
}
.table tr:nth-child(even) td {
    background-color: #d3deef;
}
.table td.cjk {
    padding-left: 3px;
    font-size: 26px;
    font-weight: 300;
}
.table tr td.current {
    background-color: #fcdb81;
    box-shadow: inset 0 0 0 1px #deebf5;
}
.table .active-layout td,
.table tr.active-layout:nth-child(even) td {
    background-color: #c4f7bd;
}
.table a {
    color: #000;
    text-decoration: underline;
    text-decoration-thickness: 2px;
    text-underline-offset: 3px;
    text-decoration-skip-ink: none;
}
.table th.sorted {
    background:
        linear-gradient(#c8102e, #c8102e) right 2px top 2px / 9px 3px no-repeat,
        linear-gradient(#c8102e, #c8102e) right 5px top 0 / 3px 2px no-repeat,
        linear-gradient(#e6e9ec, #d3d8dc 12px, #cdd1da 24px, #d5dadd);
}
.table .select,
.table tr:nth-child(even) td.select {
    padding: 0 1px;
    background: #cadae9;
    line-height: 0;
}
.select-all,
.row-select {
    display: block;
    width: 100%;
    background: linear-gradient(#d9dcde, #c9cfd7 80%, #d0d5de);
    border-right: 1px solid #9fa9b8;
}
.select-all {
    height: 41px;
    padding-left: 8px;
    background: linear-gradient(#e6e9ec, #d3d8dc 12px, #cdd1da 24px, #d5dadd);
}
.select-all svg {
    width: 24px;
    height: 24px;
}
.row-select {
    height: 36px;
    border: 1px solid #9fa9b8;
    border-top: none;
    box-shadow: inset 1px 1px 0 #eceef0;
}

/* Scrollbars */
.scrollbar {
    display: flex;
    gap: 1px;
    height: 38px;
    padding: 2px 2px 2px 0;
    border-top: 1px solid #bac7d9;
}
.scrollbar-items {
    padding-left: 44px;
}
.scroll-button {
    display: flex;
    align-items: center;
    justify-content: center;
    width: 33px;
    height: 33px;
    padding: 0 2px 2px 0;
    background-color: #f2f6fb;
    border: 1px solid #e9eef5;
}
.scroll-button svg {
    width: 9px;
    height: 17px;
}
.scroll-track {
    flex: 1;
    height: 33px;
    padding: 1px 2px;
    background-color: #fbfbfb;
    border: 1px solid #e9eef5;
    border-width: 1px 0;
}
.scroll-thumb {
    display: flex;
    align-items: center;
    justify-content: center;
    height: 30px;
    border: 1px solid #9fadb8;
    background: linear-gradient(#e9eff5, #e5edf5 70%, #d5e1ea);
}
.scroll-thumb svg {
    width: 9px;
    height: 7px;
}
.thumb-items {
    width: 59%;
}
.thumb-layouts {
    width: 60%;
}

/* Tabs */
.tabs {
    display: flex;
    height: 37px;
    padding-left: 12px;
}
.tab {
    position: relative;
    z-index: 0;
    display: flex;
    align-items: center;
    gap: 3px;
    height: 37px;
    padding: 0 13px;
    font-size: 26px;
    font-weight: 300;
    white-space: nowrap;
}
.tab svg {
    width: 31px;
    height: 31px;
}
/* outline and fill of the cut corner */
.tab::before,
.tab::after {
    content: '';
    position: absolute;
    z-index: -1;
    inset: 0;
    background: #86a8cb;
    clip-path: polygon(10px 0, 100% 0, 100% 100%, 0 100%, 0 12px);
}
.tab::after {
    inset: 1px 1px 0 1px;
    background: linear-gradient(#cfe1f1, #b9d1e8);
}
.tab-slant {
    padding: 0 9px 0 41px;
}
.tab-slant::before,
.tab-slant::after {
    clip-path: polygon(36px 0, 100% 0, 100% 100%, 0 100%);
}
.tab-columns {
    gap: 0;
    width: 99px;
    padding-right: 0;
}
.tab-active {
    z-index: 1;
    margin-left: -22px;
}
.tab-active::before {
    background: #5f88b8;
}
.tab-active::after {
    background: linear-gradient(#9dbce0, #88add8);
}
.tab-panel {
    flex: 1;
    display: flex;
    padding: 45px 14px 31px 14px;
    border: 1px solid #86a8cb;
    border-top: 4px solid #7299c6;
    background-color: #deebf5;
}

/* Status bar */
.status-bar {
    position: relative;
    display: grid;
    grid-template-columns: 1014fr 76px 1003fr;
    height: 43px;
    padding-left: 18px;
    overflow: hidden;
}
.status-message {
    display: flex;
    align-items: center;
    gap: 10px;
    justify-self: start;
    height: 40px;
    margin-top: 3px;
    padding: 0 6px 0 7px;
    border: 2px solid #c3cfe0;
    border-bottom: none;
    border-radius: 3px 3px 0 0;
    background: linear-gradient(#e8eff6, #fdfdfe);
    font-size: 26px;
    font-weight: 300;
}
.status-message svg {
    width: 27px;
    height: 27px;
}
.sap-logo {
    width: 76px;
    height: 36px;
    margin-top: 7px;
}
.sap-text {
    fill: #fff;
    stroke: #fff;
    stroke-width: 1px;
    font-family: 'Liberation Sans', sans-serif;
    font-size: 27px;
    font-weight: 700;
}
.status-info {
    display: flex;
    justify-content: flex-end;
    padding-top: 12px;
}
.status-expand {
    width: 26px;
    height: 26px;
}
.status-expand svg {
    width: 14px;
    height: 24px;
}
.status-item {
    display: flex;
    align-items: flex-start;
    height: 31px;
    padding-left: 12px;
    border-left: 1px solid #d9dce2;
    line-height: 31px;
}
.status-transaction {
    gap: 10px;
    width: 171px;
}
.status-transaction svg {
    margin-top: 7px;
}
.status-host {
    width: 155px;
}
.status-mode {
    width: 74px;
}
.status-signal {
    width: 49px;
}
.status-signal svg {
    width: 24px;
    height: 26px;
}
.status-key {
    width: 74px;
    padding-left: 22px;
}
.status-key svg {
    width: 32px;
    height: 26px;
}
.status-lock {
    width: 43px;
}
.status-lock svg {
    width: 30px;
    height: 31px;
}
.watermark {
    position: absolute;
    right: 14px;
    bottom: 5px;
    color: #8d8d8d;
    font-family: 'Liberation Sans', sans-serif;
    font-size: 16px;
    line-height: 20px;
}
```
